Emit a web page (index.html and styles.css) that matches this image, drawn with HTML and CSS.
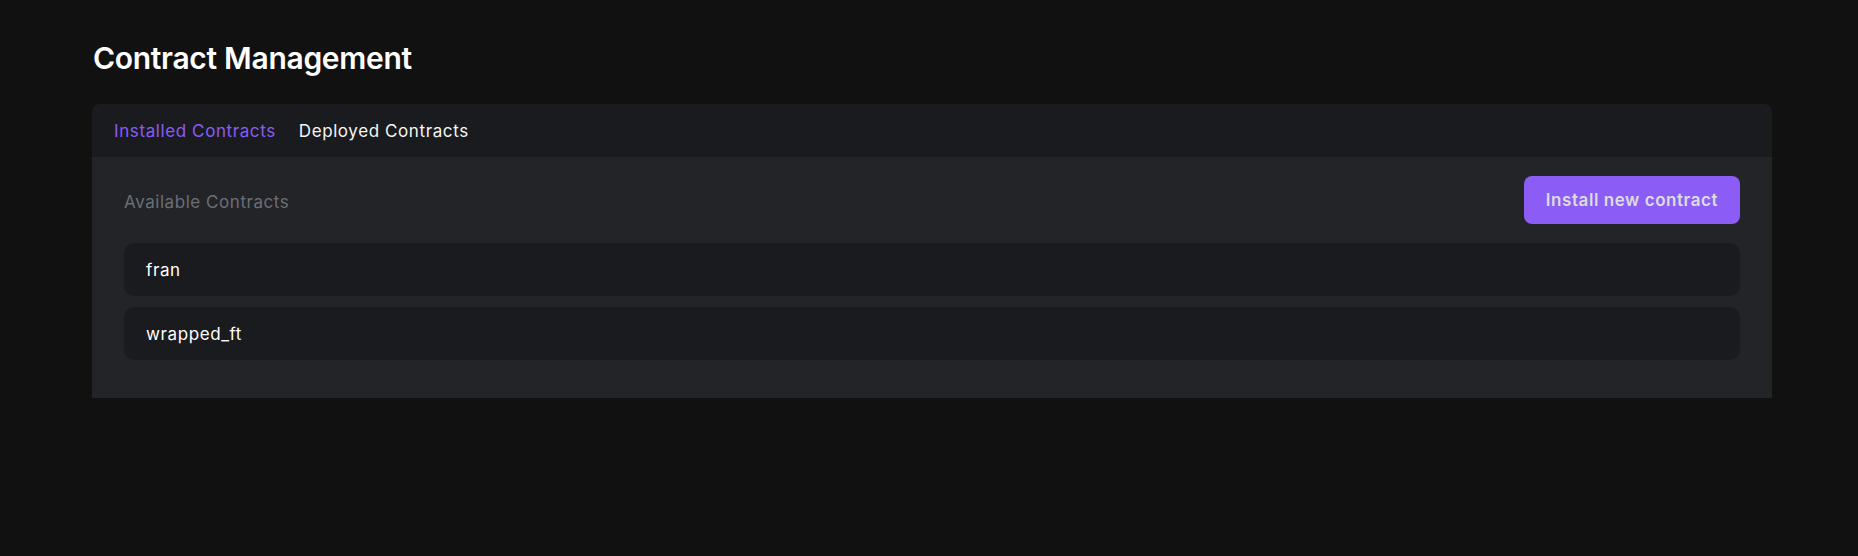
FILE: index.html
```html
<!DOCTYPE html>
<html>
<head>
<meta charset="utf-8">
<link rel="stylesheet" href="styles.css">
</head>
<body>
<main class="page">
  <h1 class="title">Contract Management</h1>
  <section class="card">
    <nav class="tabs">
      <span class="tab active">Installed Contracts</span>
      <span class="tab">Deployed Contracts</span>
    </nav>
    <div class="panel">
      <div class="panel-head">
        <span class="panel-label">Available Contracts</span>
        <button class="btn">Install new contract</button>
      </div>
      <ul class="list">
        <li class="item">fran</li>
        <li class="item">wrapped_ft</li>
      </ul>
    </div>
  </section>
</main>
</body>
</html>
```
FILE: styles.css
```css
* { box-sizing: border-box; }
html, body { margin: 0; padding: 0; background: #111111; }
body { font-family: Inter, "Noto Sans", sans-serif; color: #ffffff; }
.page { padding: 36px 86px 0 92px; }
.title { margin: 0 0 23px 1px; font-size: 30px; font-weight: 600; line-height: 45px; letter-spacing: -0.3px; }
.card { border-radius: 8px 8px 0 0; overflow: hidden; }
.tabs { display: flex; gap: 23px; height: 53px; align-items: center; padding: 0 22px; background: #1a1b1e; }
.tab { font-size: 17px; letter-spacing: 0.6px; color: #f5f5f5; }
.tab.active { color: #8b5cf6; }
.panel { background: #232427; padding: 19px 32px 38px; }
.panel-head { display: flex; justify-content: space-between; align-items: center; height: 48px; }
.panel-label { font-size: 17px; letter-spacing: 0.55px; color: #6b6f78; padding-top: 4px; }
.btn { height: 48px; padding: 0 22px; border: none; border-radius: 8px; background: #8b5cf6; color: #dcdcdc; font-family: inherit; font-size: 17px; font-weight: 600; letter-spacing: 0.55px; }
.list { list-style: none; margin: 19px 0 0; padding: 0; display: flex; flex-direction: column; gap: 11px; }
.item { height: 53px; display: flex; align-items: center; padding: 0 22px; background: #1a1b1e; border-radius: 10px; font-size: 17px; letter-spacing: 0.6px; color: #ffffff; }
```
